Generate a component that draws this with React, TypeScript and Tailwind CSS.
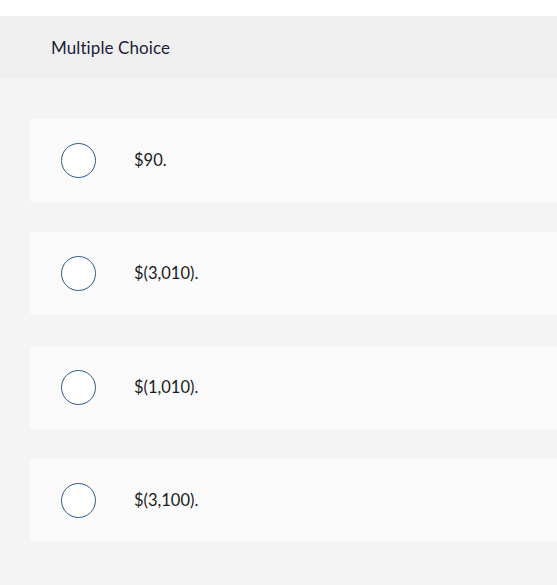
const options = ["$90.", "$(3,010).", "$(1,010).", "$(3,100)."];

export default function App() {
  return (
    <div className="w-[557px] h-[585px] overflow-hidden bg-white font-['Lato','Liberation_Sans',sans-serif]">
      <div className="h-4 bg-white" />
      {/* header */}
      <div className="h-[63px] bg-[#efefef] flex items-center pl-[51px]">
        <span className="text-[17px] text-[#1b1d3a] tracking-[0.1px]">Multiple Choice</span>
      </div>
      {/* answers */}
      <div className="bg-[#f4f4f4] h-[506px] pl-[30px] pt-10 flex flex-col gap-[30.6px]">
        {options.map((opt) => (
          <div
            key={opt}
            className="h-[82.8px] bg-[#fafafa] rounded-l-[3px] flex items-center pl-[31px]"
          >
            <div className="w-[35px] h-[35px] rounded-full border border-[#2c5a8c] bg-white shrink-0" />
            <span className="ml-[38px] text-[16.5px] text-[#1a1a1a]">{opt}</span>
          </div>
        ))}
      </div>
    </div>
  );
}
